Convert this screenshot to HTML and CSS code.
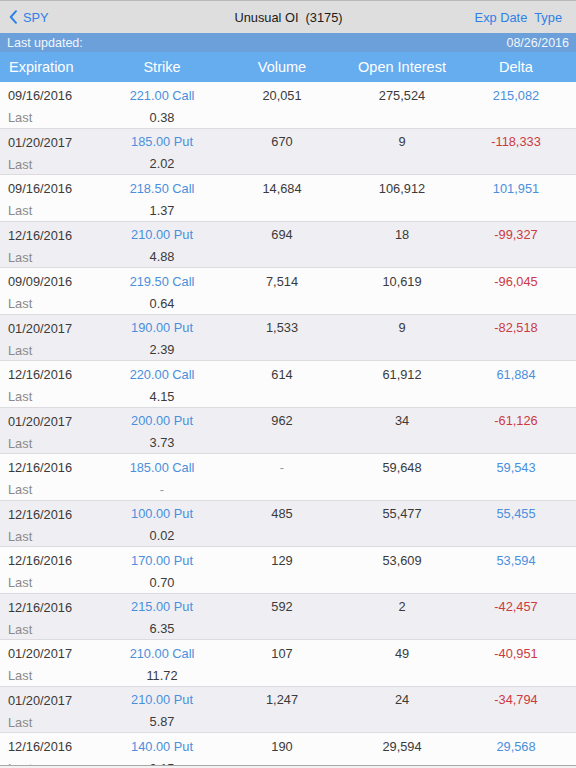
FILE: index.html
```html
<!DOCTYPE html>
<html>
<head>
<meta charset="utf-8">
<link rel="stylesheet" href="styles.css">
</head>
<body>
<div class="nav">
  <div class="back">
    <svg class="chev" width="9" height="14" viewBox="0 0 9 14"><path d="M7 1.2 L1.8 7 L7 12.8" fill="none" stroke="#2f80e8" stroke-width="2" stroke-linecap="round" stroke-linejoin="round"/></svg>
    <span>SPY</span>
  </div>
  <div class="title">Unusual OI&nbsp;&nbsp;(3175)</div>
  <div class="actions"><span>Exp Date</span><span>Type</span></div>
</div>
<div class="updated"><span>Last updated:</span><span>08/26/2016</span></div>
<div class="head">
  <div class="c1">Expiration</div><div class="cc">Strike</div><div class="cc">Volume</div><div class="cc">Open Interest</div><div class="cc">Delta</div>
</div>
<div class="list" id="list"></div>
<div class="toolbar"></div>
<script src="app.js"></script>
</body>
</html>
```
FILE: app.js
```js
var rows = [
  ["09/16/2016","221.00 Call","20,051","275,524","215,082","0.38"],
  ["01/20/2017","185.00 Put","670","9","-118,333","2.02"],
  ["09/16/2016","218.50 Call","14,684","106,912","101,951","1.37"],
  ["12/16/2016","210.00 Put","694","18","-99,327","4.88"],
  ["09/09/2016","219.50 Call","7,514","10,619","-96,045","0.64"],
  ["01/20/2017","190.00 Put","1,533","9","-82,518","2.39"],
  ["12/16/2016","220.00 Call","614","61,912","61,884","4.15"],
  ["01/20/2017","200.00 Put","962","34","-61,126","3.73"],
  ["12/16/2016","185.00 Call","-","59,648","59,543","-"],
  ["12/16/2016","100.00 Put","485","55,477","55,455","0.02"],
  ["12/16/2016","170.00 Put","129","53,609","53,594","0.70"],
  ["12/16/2016","215.00 Put","592","2","-42,457","6.35"],
  ["01/20/2017","210.00 Call","107","49","-40,951","11.72"],
  ["01/20/2017","210.00 Put","1,247","24","-34,794","5.87"],
  ["12/16/2016","140.00 Put","190","29,594","29,568","0.15"]
];
var html = "";
rows.forEach(function (r, i) {
  var neg = r[4].charAt(0) === "-";
  var dash = function (v) { return v === "-" ? ' dash' : ''; };
  html += '<div class="row ' + (i % 2 ? 'alt' : '') + '">' +
    '<div class="c1">' + r[0] + '</div>' +
    '<div class="cc blue">' + r[1] + '</div>' +
    '<div class="cc' + dash(r[2]) + '">' + r[2] + '</div>' +
    '<div class="cc">' + r[3] + '</div>' +
    '<div class="cc ' + (neg ? 'red' : 'blue') + '">' + r[4] + '</div>' +
    '<div class="c1 last">Last</div>' +
    '<div class="cc' + dash(r[5]) + '">' + r[5] + '</div>' +
    '</div>';
});
document.getElementById("list").innerHTML = html;
```
FILE: styles.css
```css
html, body {
  margin: 0;
  padding: 0;
  background: #fcfcfc;
  font-family: "Liberation Sans", Arial, sans-serif;
  overflow: hidden;
}
body {
  width: 576px;
  height: 768px;
  position: relative;
}
.nav {
  height: 33px;
  box-sizing: border-box;
  border-top: 1px solid #b9b9b9;
  background: #dedede;
  display: grid;
  grid-template-columns: 1fr auto 1fr;
  align-items: center;
  padding: 0 14px 0 9px;
  font-size: 12.8px;
}
.back {
  display: flex;
  align-items: center;
  color: #2f80e8;
  gap: 5px;
}
.chev { display: block; margin-top: -1px; }
.title {
  color: #1a1a1a;
  padding-left: 6px;
}
.actions {
  justify-self: end;
  display: flex;
  gap: 7px;
  color: #2f80e8;
}
.updated {
  height: 19px;
  background: #6ba0da;
  color: #f2f6fc;
  font-size: 12.5px;
  display: flex;
  justify-content: space-between;
  align-items: center;
  padding: 0 7px;
}
.head {
  height: 30px;
  background: #66adef;
  color: #ffffff;
  font-size: 14.5px;
  display: grid;
  grid-template-columns: 102px 120px 120px 120px 108px;
  align-items: center;
}
.head .c1 { padding-left: 9px; }
.c1 { padding-left: 8px; }
.cc { text-align: center; }
.row {
  height: 46.5px;
  box-sizing: border-box;
  border-bottom: 1px solid #dcdce0;
  background: #fcfcfc;
  display: grid;
  grid-template-columns: 102px 120px 120px 120px 108px;
  grid-template-rows: 26px 18px;
  align-items: center;
  font-size: 12.8px;
  color: #3a3a3a;
}
.row.alt { background: #efeff3; }
.row .c1 { padding-top: 1px; }
.last { color: #8a8a8a; grid-column: 1; }
.blue { color: #4a8fdd; }
.red { color: #cc3a3f; }
.dash { color: #999; }
.toolbar {
  position: absolute;
  left: 0;
  right: 0;
  bottom: 0;
  height: 2px;
  border-top: 1px solid #a8a8a8;
  background: #f2f2f2;
}
```
